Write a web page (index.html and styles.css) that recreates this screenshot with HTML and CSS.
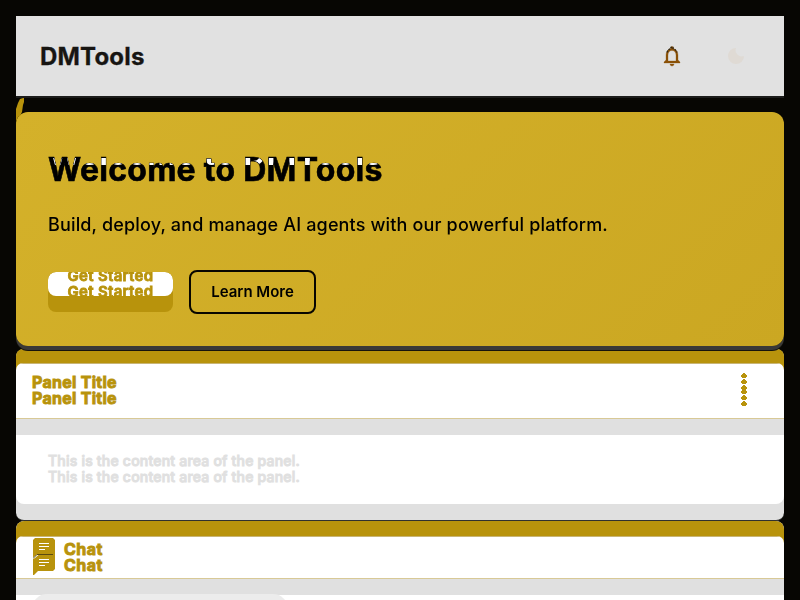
FILE: index.html
```html
<!DOCTYPE html>
<html lang="en">
<head>
<meta charset="utf-8">
<title>DMTools</title>
<link rel="stylesheet" href="styles.css">
</head>
<body>
<header class="header">
  <div class="brand">DMTools</div>
  <div class="actions">
    <svg class="bell" viewBox="0 0 24 24"><path d="M12 22c1.1 0 2-.9 2-2h-4c0 1.100.9 2 2 2zm6-6v-5c0-3.070-1.630-5.640-4.500-6.320V4c0-.83-.67-1.500-1.500-1.500s-1.500.67-1.500 1.500v.68C7.640 5.360 6 7.920 6 11v5l-2 2v1h16v-1l-2-2zm-2 1H8v-6c0-2.480 1.510-4.500 4-4.500s4 2.020 4 4.500v6z"/><path class="bell-shade" d="M7 8.500c.6-2 2-3.500 4-4V3.300h2v1.200c2 .5 3.400 2 4 4"/></svg>
    <svg class="moon" viewBox="0 0 16 16"><path d="M8 0A8 8 0 1 0 16 8A6.200 6.200 0 0 1 8 0z"/></svg>
  </div>
</header>
<main>
  <section class="hero">
    <svg class="sliver" viewBox="0 0 8 24"><path d="M7 0H8V4L7 7 6 14 4 18 2 19 0 24V11L2 5 4 1z"/></svg>
    <h1 class="title">Welcome to DMTools
      <span class="overlap" aria-hidden="true"><span class="copy high">Welcome to DMTools</span><span class="copy low">Welcome to DMTools</span></span>
    </h1>
    <p class="lead">Build, deploy, and manage AI agents with our powerful platform.</p>
    <div class="buttons">
      <button class="btn primary"><span class="face"></span><span class="label ghost">Get Started</span><span class="label">Get Started</span></button>
      <button class="btn outline">Learn More</button>
    </div>
  </section>
  <section class="panel">
    <div class="panel-top"></div>
    <div class="panel-head">
      <div class="double"><span>Panel Title</span><span>Panel Title</span></div>
      <svg class="dots" viewBox="0 0 6 34"><g id="d"><path id="p" d="M2 0h2v1h1v1h1v2H5v1H1V4H0V2h1V1h1z"/><use href="#p" y="6"/><use href="#p" y="12"/></g><use href="#d" y="16"/></svg>
    </div>
    <div class="panel-body"><div class="content">
      <div class="double faint"><span>This is the content area of the panel.</span><span>This is the content area of the panel.</span></div>
    </div></div>
  </section>
  <section class="panel chat">
    <div class="panel-top"></div>
    <div class="panel-head">
      <svg class="chat-icon" viewBox="0 0 22 37"><path d="M2 0h18l2 2v29l-2 2H5l-4 4H0V2z"/><path d="M0 19.500l4-3h2l-4 3.500-2 1z" fill="#fff"/><path d="M0 20.500l4-4h16" fill="none" stroke="#5a4a10" stroke-width="1"/><path d="M6 5.500h10M6 8.500h10M6 11.500h6M6 21.500h10M6 24.500h10M6 27.500h6" stroke="#fff"/></svg>
      <div class="double"><span>Chat</span><span>Chat</span></div>
    </div>
    <div class="chat-body"><div class="messages"></div><div class="bubble"></div></div>
  </section>
</main>
</body>
</html>
```
FILE: styles.css
```css
* { box-sizing: border-box; }
html { background: #070603; }
body {
  margin: 0;
  padding: 16px 16px 0;
  height: 600px;
  overflow: hidden;
  background: #070603;
  font-family: Inter, sans-serif;
}
.header {
  height: 82px;
  padding: 0 40px 0 24px;
  display: flex;
  align-items: center;
  justify-content: space-between;
  background: #e1e1e1;
  border-bottom: 2px solid #1c1c1b;
}
.brand { font-size: 24px; font-weight: 700; line-height: 29px; letter-spacing: 0.2px; color: #171512; -webkit-text-stroke: 0.3px #171512; }
.actions { display: flex; align-items: center; gap: 44px; }
.bell { width: 24px; height: 24px; fill: #8b5108; stroke: #8b5108; stroke-width: 0.3; }
.bell-shade { fill: none; stroke: #2b2415; stroke-width: 1.2; stroke-dasharray: 2 1; }
.moon { width: 16px; height: 16px; fill: #dfdad4; }
.hero {
  position: relative;
  z-index: 2;
  height: 234px;
  margin-top: 14px;
  padding: 38px 32px;
  border-radius: 12px;
  background: linear-gradient(135deg, #d4b12a, #cba722);
  box-shadow: 0 4px 0 #3a3937, 0 5px 0 #15130c;
}
.sliver { position: absolute; left: 0; top: -14px; width: 8px; height: 24px; fill: #b8930c; z-index: -1; }
.title {
  position: relative;
  margin: 0;
  font-size: 32px;
  font-weight: 700;
  line-height: 40px;
  letter-spacing: 0.27px;
  color: #000;
  -webkit-text-stroke: 0.6px currentColor;
}
.overlap {
  position: absolute;
  left: 0;
  top: 8px;
  width: 345px;
  height: 7px;
  overflow: hidden;
  isolation: isolate;
  background: #000;
  mix-blend-mode: lighten;
}
.copy { position: absolute; left: 0; width: 345px; height: 40px; background: #000; color: #fff; white-space: nowrap; -webkit-text-stroke: 0; }
.high { top: -24px; }
.low { top: -8px; mix-blend-mode: multiply; }
.lead { margin: 24px 0 0; font-size: 18px; font-weight: 500; line-height: 22px; letter-spacing: 0.155px; color: #000; }
.buttons { display: flex; gap: 16px; margin-top: 34px; }
.btn {
  position: relative;
  height: 44px;
  padding: 0;
  border-radius: 8px;
  font: 600 15px/20px Inter, sans-serif;
}
.primary {
  width: 125px;
  height: 40px;
  margin-top: 2px;
  border: 0;
  overflow: hidden;
  background: #b8930c;
  color: #b8930c;
}
.face { position: absolute; left: 0; right: 0; top: 0; height: 24px; background: #fff; border-radius: 8px; }
.label { position: relative; letter-spacing: 0.3px; -webkit-text-stroke: 0.8px #b8930c; }
.ghost { position: absolute; left: 0; right: 0; top: -6px; }
.outline { width: 127px; background: transparent; border: 2px solid #080600; color: #000; }
.panel { height: 172px; margin-top: 3px; border-radius: 8px; background: #e0e0e0; border-bottom: 1px solid #30312f; }
.panel-top { height: 22px; margin-bottom: -8px; background: #b8930c; border-radius: 7px 7px 0 0; }
.panel-head {
  display: flex;
  align-items: center;
  justify-content: space-between;
  height: 56px;
  padding: 0 37px 2px 16px;
  background: #fff linear-gradient(#c8b576, #c8b576) top / 100% 1px no-repeat;
  border-bottom: 1px solid #d8c996;
  border-radius: 7px 7px 0 0;
  box-shadow: 0 -8px 0 #b8930c;
}
.double { display: flex; flex-direction: column; font-size: 16px; font-weight: 700; line-height: 16px; letter-spacing: 0.28px; color: #b8930c; -webkit-text-stroke: 0.9px #b8930c; }
.dots { width: 6px; height: 34px; fill: #b8930c; }
.panel-body { padding-top: 16px; }
.content { height: 69px; padding: 18px 32px; background: #fff; border-radius: 0 0 8px 8px; }
.faint { font-size: 14px; font-weight: 500; letter-spacing: 0.21px; color: #e0e0e0; -webkit-text-stroke-color: #e0e0e0; }
.chat { height: 79px; margin-top: 0; border: 0; border-radius: 8px 8px 0 0; overflow: hidden; }
.chat .panel-top { height: 23px; }
.chat .panel-head { height: 43px; justify-content: flex-start; gap: 10px; }
.chat .double { padding-top: 2px; letter-spacing: 0.5px; }
.chat-icon { width: 22px; height: 37px; margin-left: 1px; margin-right: -1px; fill: #b8930c; }
.chat-body { position: relative; padding-top: 16px; }
.messages { height: 5px; background: #fff; }
.bubble { position: absolute; left: 16px; top: 15px; width: 256px; height: 30px; background: #ececec; border-radius: 16px; }
```
